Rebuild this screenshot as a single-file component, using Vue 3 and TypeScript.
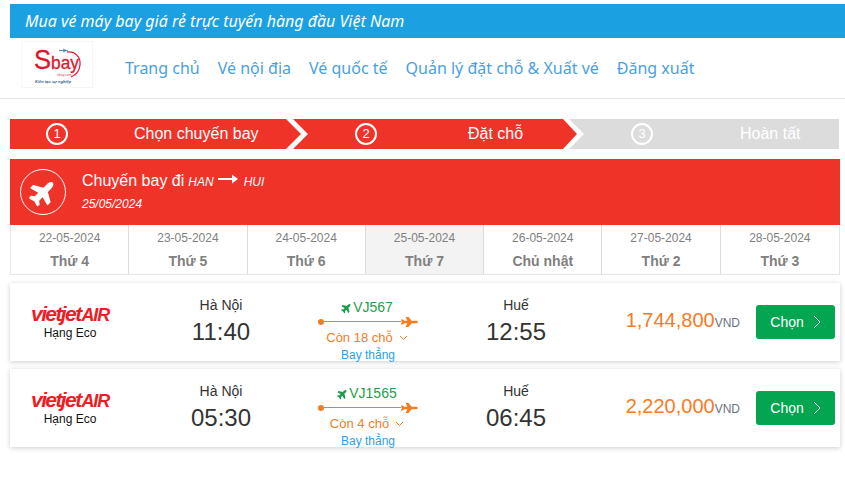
<script setup lang="ts">
const planePath = "M480 192H365.71L260.61 8.06A16.014 16.014 0 0 0 246.71 0h-65.5c-10.63 0-18.3 10.17-15.38 20.39L214.86 192H112l-43.2-57.6c-3.02-4.03-7.77-6.4-12.8-6.4H16.01C5.6 128-2.04 137.78.49 147.88L32 256 .49 364.12C-2.04 374.22 5.6 384 16.01 384H56c5.04 0 9.78-2.37 12.8-6.4L112 320h102.86l-49.03 171.6c-2.92 10.22 4.75 20.4 15.38 20.4h65.5c5.74 0 11.04-3.08 13.89-8.06L365.71 320H480c35.35 0 96-28.65 96-64s-60.65-64-96-64z";

const nav = ["Trang chủ", "Vé nội địa", "Vé quốc tế", "Quản lý đặt chỗ & Xuất vé", "Đăng xuất"];

const steps = [
  { n: 1, label: "Chọn chuyến bay", cls: "s1" },
  { n: 2, label: "Đặt chỗ", cls: "s2" },
  { n: 3, label: "Hoàn tất", cls: "s3" },
];

const dates = [
  { d: "22-05-2024", w: "Thứ 4", active: false },
  { d: "23-05-2024", w: "Thứ 5", active: false },
  { d: "24-05-2024", w: "Thứ 6", active: false },
  { d: "25-05-2024", w: "Thứ 7", active: true },
  { d: "26-05-2024", w: "Chủ nhật", active: false },
  { d: "27-05-2024", w: "Thứ 2", active: false },
  { d: "28-05-2024", w: "Thứ 3", active: false },
];

const flights = [
  { code: "VJ567", dep: "11:40", arr: "12:55", seats: "Còn 18 chỗ", price: "1,744,800" },
  { code: "VJ1565", dep: "05:30", arr: "06:45", seats: "Còn 4 chỗ", price: "2,220,000" },
];
</script>

<template>
  <div class="page">
    <div class="topbar">Mua vé máy bay giá rẻ trực tuyến hàng đầu Việt Nam</div>

    <header class="header">
      <div class="logo">
        <svg width="72" height="47" viewBox="0 0 72 47">
          <path d="M46 11 C54 10 60 16 59 24 C58.500 30 55 34 50 36" fill="none" stroke="#e2142d" stroke-width="1.200" />
          <path d="M38 9.500h9M42 8l3 1.500-3 1.500" fill="none" stroke="#3a6ea5" stroke-width="0.800" />
          <text x="13" y="28" class="logo-main" textLength="45" lengthAdjust="spacingAndGlyphs"><tspan class="logo-s">S</tspan><tspan class="logo-bay">bay</tspan></text>
          <text x="36" y="35" class="logo-com">sbay.com.vn</text>
          <text x="14" y="42" class="logo-tag">Kiến tạo sự nghiệp</text>
        </svg>
      </div>
      <nav class="nav">
        <span v-for="item in nav" :key="item">{{ item }}</span>
      </nav>
    </header>

    <div class="steps">
      <div v-for="s in steps" :key="s.n" class="step" :class="s.cls">
        <span class="num">{{ s.n }}</span>
        <span class="step-label">{{ s.label }}</span>
      </div>
    </div>

    <section class="panel">
      <div class="panel-icon">
        <svg width="28" height="25" viewBox="0 0 576 512" class="rot">
          <path :d="planePath" fill="#fff" />
        </svg>
      </div>
      <div class="panel-text">
        <div class="panel-title">
          <span>Chuyến bay đi</span>
          <i>HAN</i>
          <svg width="20" height="10" viewBox="0 0 20 10" class="panel-arrow">
            <path d="M0 4h14V0.500L20 5l-6 4.500V6H0z" fill="#fff" />
          </svg>
          <i class="to">HUI</i>
        </div>
        <div class="panel-date">25/05/2024</div>
      </div>
    </section>

    <div class="dates">
      <div v-for="d in dates" :key="d.d" class="date" :class="{ active: d.active }">
        <div class="date-d">{{ d.d }}</div>
        <div class="date-w">{{ d.w }}</div>
      </div>
    </div>

    <article v-for="f in flights" :key="f.code" class="card">
      <div class="airline">
        <div class="vj"><span>vietjet</span><em>AIR</em></div>
        <div class="cabin">Hạng Eco</div>
      </div>
      <div class="place">
        <div class="city">Hà Nội</div>
        <div class="time">{{ f.dep }}</div>
      </div>
      <div class="route">
        <div class="code">
          <svg width="11" height="10" viewBox="0 0 576 512" class="rot">
            <path :d="planePath" fill="#1f9d4d" />
          </svg><span>{{ f.code }}</span>
        </div>
        <div class="line">
          <span class="dot"></span>
          <span class="stroke"></span>
          <svg width="17" height="10" viewBox="0 0 576 512" preserveAspectRatio="none" class="line-plane">
            <path :d="planePath" fill="#f57c1f" />
          </svg>
        </div>
        <div class="seats">
          <span>{{ f.seats }}</span><svg width="9" height="6" viewBox="0 0 9 6" class="seat-chev">
            <path d="M1 1l3.500 3.500L8 1" fill="none" stroke="#f57c1f" stroke-width="1" />
          </svg>
        </div>
        <div class="direct">Bay thẳng</div>
      </div>
      <div class="place">
        <div class="city">Huế</div>
        <div class="time">{{ f.arr }}</div>
      </div>
      <div class="buy">
        <div class="price">{{ f.price }}<span>VND</span></div>
        <button class="choose" type="button">
          Chọn
          <svg width="8" height="14" viewBox="0 0 8 14">
            <path d="M1 1l6 6-6 6" fill="none" stroke="#fff" stroke-width="1" />
          </svg>
        </button>
      </div>
    </article>
  </div>
</template>

<style scoped>
.page {
  width: 845px;
  height: 478px;
  overflow: hidden;
  padding-top: 4px;
  box-sizing: border-box;
  background: #fff;
  font-family: "Liberation Sans", Arial, sans-serif;
}
.topbar {
  margin-left: 10px;
  height: 34px;
  padding-left: 15px;
  background: #1ba1e2;
  color: #fff;
  font: italic 400 16px/34px "Noto Sans", sans-serif;
}
.header {
  height: 60px;
  display: flex;
  align-items: center;
  border-bottom: 1px solid #e8e8e8;
  box-sizing: content-box;
  padding-left: 21px;
}
.logo {
  width: 72px;
  height: 47px;
  border: 1px solid #f6f6f6;
  box-sizing: border-box;
  margin-top: -7px;
  overflow: hidden;
}
.logo svg {
  display: block;
  margin: -1px;
}
.logo-main {
  font-family: "Liberation Sans", sans-serif;
  fill: #e2142d;
  stroke: #e2142d;
  stroke-width: 0.300px;
}
.logo-s {
  font-size: 28px;
}
.logo-bay {
  font-size: 19px;
}
.logo-com {
  font: 400 3.500px "Liberation Sans", sans-serif;
  fill: #d8495a;
}
.logo-tag {
  font: italic 700 4px "Liberation Sans", sans-serif;
  fill: #2f5f8f;
}
.nav {
  display: flex;
  gap: 18px;
  margin-left: 32px;
  font: 400 16px "Noto Sans", sans-serif;
  color: #4b9fdf;
}
.steps {
  display: flex;
  margin: 20px 0 10px 10px;
  height: 30px;
}
.step {
  position: relative;
  height: 30px;
  color: #fff;
  font-size: 16px;
  line-height: 30px;
  background: #ef3329;
}
.s1 {
  width: 291px;
  clip-path: polygon(0 0, 276px 0, 291px 15px, 276px 30px, 0 30px);
}
.s2 {
  width: 284px;
  margin-left: -8px;
  clip-path: polygon(0 0, 270px 0, 284px 15px, 270px 30px, 0 30px, 15px 15px);
}
.s3 {
  width: 270px;
  margin-left: -8px;
  background: #dcdcdc;
  clip-path: polygon(0 0, 100% 0, 100% 100%, 0 100%, 15px 15px);
}
.num {
  position: absolute;
  top: 4px;
  width: 22px;
  height: 22px;
  border: 2px solid #fff;
  border-radius: 50%;
  box-sizing: border-box;
  font-size: 13px;
  line-height: 18px;
  text-align: center;
}
.step-label {
  position: absolute;
  top: 0;
  white-space: nowrap;
}
.s1 .num { left: 36px; }
.s1 .step-label { left: 124px; }
.s2 .num { left: 62px; }
.s2 .step-label { left: 175px; }
.s3 .num { left: 62px; }
.s3 .step-label { left: 171px; }
.panel {
  margin-left: 10px;
  width: 830px;
  height: 66px;
  background: #ef3329;
  color: #fff;
  display: flex;
  align-items: center;
  padding-left: 10px;
  box-sizing: border-box;
}
.panel-icon {
  width: 46px;
  height: 46px;
  border: 1px solid #fff;
  border-radius: 50%;
  box-sizing: border-box;
  display: flex;
  align-items: center;
  justify-content: center;
  flex: none;
}
.rot {
  transform: rotate(-45deg);
}
.panel-text {
  margin-left: 16px;
  margin-top: -4px;
}
.panel-title {
  font-size: 16px;
  line-height: 20px;
  display: flex;
  align-items: center;
  white-space: nowrap;
}
.panel-title i {
  font-size: 12px;
  margin-left: 4px;
  margin-top: 2px;
}
.panel-title i.to {
  margin-left: 6px;
}
.panel-arrow {
  margin: -3px 0 0 4px;
}
.panel-date {
  margin-top: 5px;
  font-size: 12px;
  font-style: italic;
  line-height: 14px;
}
.dates {
  margin-left: 10px;
  width: 830px;
  height: 50px;
  display: grid;
  grid-template-columns: repeat(7, 1fr);
  border: 1px solid #e6e6e6;
  border-top: 0;
  box-sizing: border-box;
  margin-bottom: 8px;
}
.date {
  border-right: 1px solid #dcdcdc;
  text-align: center;
  color: #808080;
  padding-top: 6px;
}
.date:last-child {
  border-right: 0;
}
.date.active {
  background: #f3f3f3;
}
.date-d {
  font-size: 12px;
  line-height: 14px;
}
.date-w {
  margin-top: 9px;
  font-size: 14px;
  font-weight: 700;
  line-height: 15px;
}
.card {
  margin: 0 0 8px 10px;
  width: 830px;
  height: 78px;
  display: grid;
  grid-template-columns: 120px 182px 110px 188px 1fr;
  background: #fff;
  box-shadow: 0 1px 5px rgba(0, 0, 0, 0.2);
}
.airline {
  text-align: center;
  padding-top: 21px;
}
.vj {
  color: #ee1c25;
  font: italic 700 21px/20px "Liberation Sans", sans-serif;
  letter-spacing: -1.600px;
  white-space: nowrap;
}
.vj em {
  font-size: 18px;
  margin-left: 1px;
  letter-spacing: -1.200px;
}
.cabin {
  margin-top: 1px;
  font-size: 12px;
  line-height: 14px;
  color: #111;
}
.place {
  text-align: center;
  padding-top: 13px;
  color: #333;
}
.city {
  font-size: 14px;
  line-height: 18px;
}
.time {
  margin-top: 4px;
  font-size: 24px;
  line-height: 28px;
}
.route {
  text-align: center;
  padding-top: 16px;
}
.code {
  font-size: 14px;
  line-height: 16px;
  color: #1f9d4d;
}
.code svg {
  margin-right: 1px;
  vertical-align: -1px;
}
.line {
  display: flex;
  align-items: center;
  height: 13px;
  margin: 0 4px 0 6px;
}
.dot {
  width: 6px;
  height: 6px;
  border-radius: 50%;
  background: #f57c1f;
  flex: none;
}
.stroke {
  flex: 1;
  height: 1px;
  background: #f57c1f;
}
.line-plane {
  flex: none;
}
.seats {
  margin-top: 2px;
  font-size: 13px;
  line-height: 16px;
  color: #f57c1f;
}
.seat-chev {
  margin-left: 6px;
  vertical-align: 1px;
}
.direct {
  margin-top: 2px;
  padding-left: 2px;
  font-size: 12px;
  line-height: 14px;
  color: #2e9fe6;
}
.buy {
  display: flex;
  align-items: center;
  justify-content: flex-end;
  gap: 16px;
  padding: 0 5px 0 0;
  height: 78px;
}
.price {
  color: #f97b1f;
  font-size: 20px;
  white-space: nowrap;
  margin-top: -3px;
}
.price span {
  font-size: 12px;
  color: #6b7280;
}
.choose {
  width: 79px;
  height: 34px;
  border: 0;
  border-radius: 3px;
  background: #04a551;
  color: #fff;
  font: 400 14px "Liberation Sans", sans-serif;
  display: flex;
  align-items: center;
  justify-content: center;
  gap: 9px;
  padding: 0;
}
</style>
